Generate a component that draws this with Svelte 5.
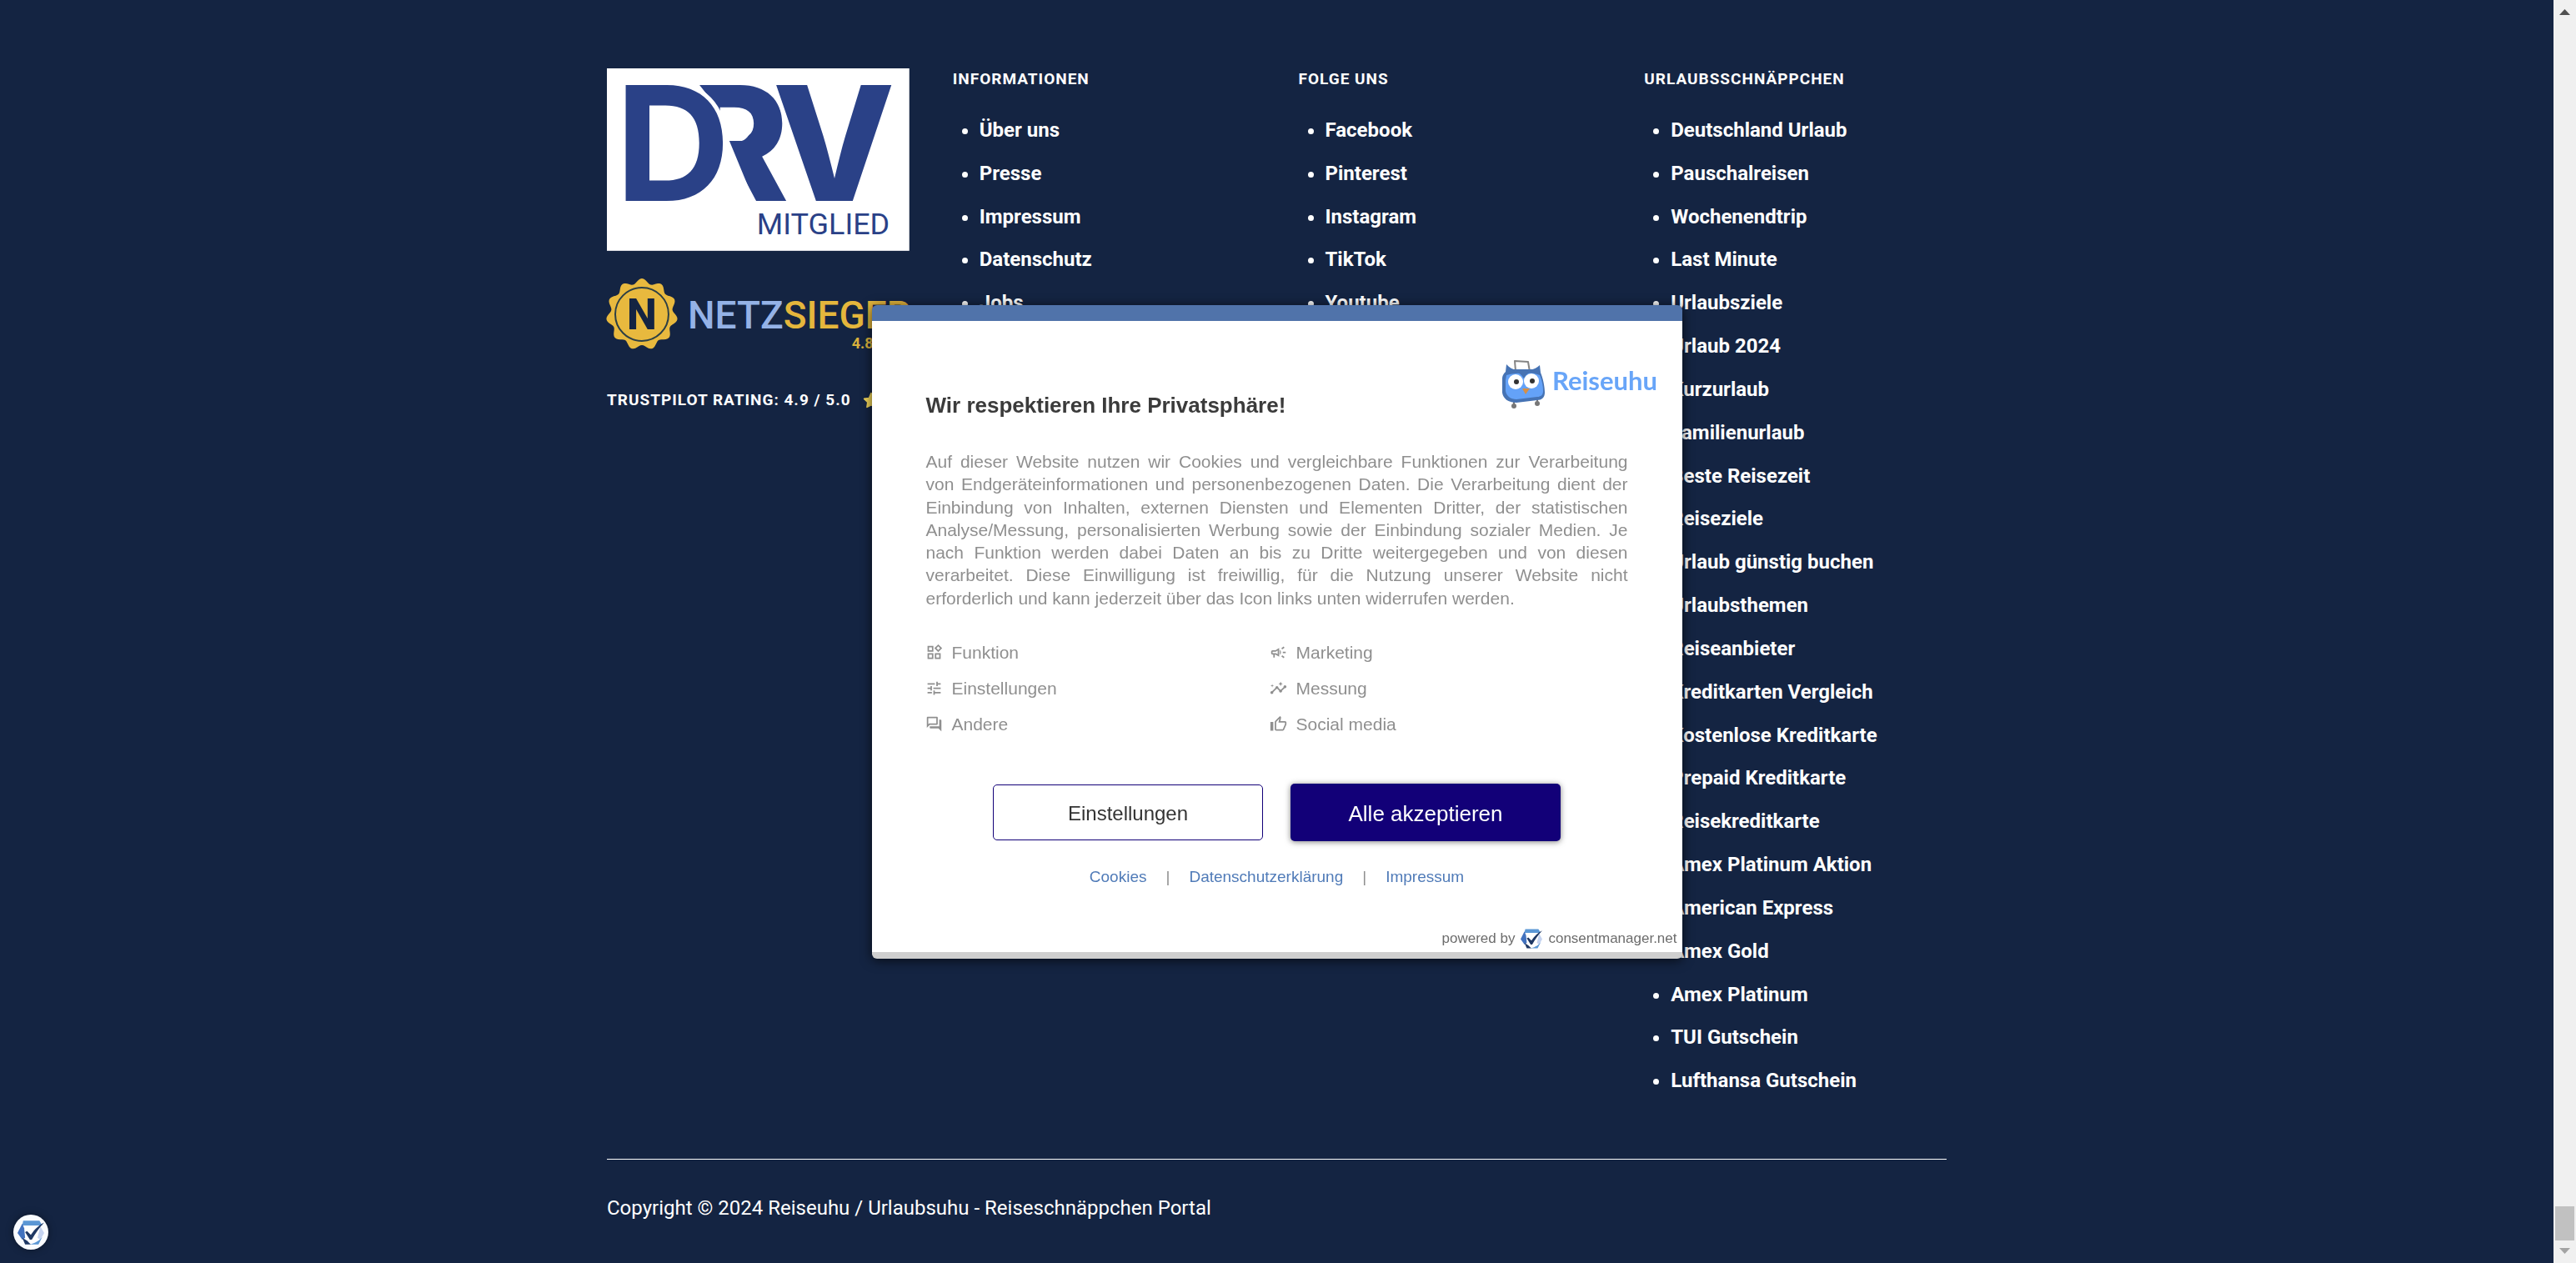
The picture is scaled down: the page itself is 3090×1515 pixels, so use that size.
<script>
  const info = ['Über uns', 'Presse', 'Impressum', 'Datenschutz', 'Jobs'];
  const social = ['Facebook', 'Pinterest', 'Instagram', 'TikTok', 'Youtube'];
  const deals = [
    'Deutschland Urlaub', 'Pauschalreisen', 'Wochenendtrip', 'Last Minute', 'Urlaubsziele',
    'Urlaub 2024', 'Kurzurlaub', 'Familienurlaub', 'Beste Reisezeit', 'Reiseziele',
    'Urlaub günstig buchen', 'Urlaubsthemen', 'Reiseanbieter', 'Kreditkarten Vergleich',
    'Kostenlose Kreditkarte', 'Prepaid Kreditkarte', 'Reisekreditkarte', 'Amex Platinum Aktion',
    'American Express', 'Amex Gold', 'Amex Platinum', 'TUI Gutschein', 'Lufthansa Gutschein'
  ];
  const columns = [
    { title: 'Informationen', items: info },
    { title: 'Folge uns', items: social },
    { title: 'Urlaubsschnäppchen', items: deals }
  ];
  const purposes = [
    { label: 'Funktion', d: 'M17.7 3.8 20.2 6.300l-2.500 2.500-2.500-2.500 2.500-2.500M9 5v4H5V5h4m10 10v4h-4v-4h4M9 15v4H5v-4h4m8.700-14L12.300 6.300l5.400 5.400 5.300-5.400L17.700 1zM11 3H3v8h8V3zm10 10h-8v8h8v-8zM11 13H3v8h8v-8z' },
    { label: 'Marketing', d: 'M18 11v2h4v-2h-4zm-2 6.600c1 .700 2.200 1.600 3.200 2.400l1.200-1.600c-1-.800-2.200-1.700-3.200-2.400l-1.200 1.600zM20.400 5.600 19.200 4c-1 .800-2.200 1.700-3.200 2.400l1.200 1.600c1-.700 2.200-1.600 3.200-2.400zM4 9c-1.100 0-2 .900-2 2v2c0 1.100.900 2 2 2h1v4h2v-4h1l5 3V6L8 9H4zm5.030 1.710L11 9.530v4.940l-1.970-1.180-.480-.290H4v-2h4.550l.480-.290zM15.500 12c0-1.330-.580-2.530-1.500-3.350v6.690c.920-.810 1.500-2.010 1.500-3.340z' },
    { label: 'Einstellungen', d: 'M3 17v2h6v-2H3zM3 5v2h10V5H3zm10 16v-2h8v-2h-8v-2h-2v6h2zM7 9v2H3v2h4v2h2V9H7zm14 4v-2H11v2h10zm-6-4h2V7h4V5h-4V3h-2v6z' },
    { label: 'Messung', d: 'M21 8c-1.450 0-2.260 1.440-1.930 2.510l-3.550 3.560c-.300-.090-.740-.090-1.040 0l-2.550-2.550C12.270 10.450 11.460 9 10 9c-1.450 0-2.270 1.440-1.930 2.520l-4.560 4.550C2.440 15.740 1 16.550 1 18c0 1.100.900 2 2 2 1.450 0 2.260-1.440 1.930-2.510l4.550-4.560c.300.090.740.090 1.040 0l2.550 2.550C12.730 16.550 13.540 18 15 18c1.450 0 2.270-1.440 1.930-2.520l3.560-3.550C21.560 12.260 23 11.450 23 10c0-1.100-.900-2-2-2zM15 9l.940-2.070L18 6l-2.060-.930L15 3l-.920 2.070L12 6l2.080.930zM3.500 11 4 9l2-.500L4 8l-.500-2L3 8l-2 .500L3 9z' },
    { label: 'Andere', d: 'M15 4v7H5.170L4 12.170V4h11m1-2H3c-.550 0-1 .450-1 1v14l4-4h10c.550 0 1-.450 1-1V3c0-.550-.450-1-1-1zm5 4h-2v9H6v2c0 .550.450 1 1 1h11l4 4V7c0-.550-.450-1-1-1z' },
    { label: 'Social media', d: 'M9 21h9c.830 0 1.540-.500 1.840-1.220l3.020-7.050c.090-.230.140-.470.140-.730v-2c0-1.100-.900-2-2-2h-6.310l.950-4.570.030-.320c0-.410-.170-.790-.440-1.060L14.170 1 7.580 7.590C7.220 7.950 7 8.450 7 9v10c0 1.100.900 2 2 2zM9 9l4.340-4.340L12 10h9v2l-3 7H9V9zM1 9h4v12H1z' }
  ];
  const legal = ['Cookies', 'Datenschutzerklärung', 'Impressum'];

  // Wavy outline of the seal: eleven lobes, the first one pointing up.
  const sealEdge = Array.from({ length: 132 }, (_, i) => {
    const a = (i / 132) * Math.PI * 2;
    const r = 40 + 3 * Math.cos(11 * a);
    return `${(42 + r * Math.sin(a)).toFixed(2)},${(43 - r * Math.cos(a)).toFixed(2)}`;
  }).join(' ');
</script>

{#snippet consentMark()}
  <path d="M6 7h17v11l-9 5-8-5z" fill="#fff" />
  <path d="M6 0h17l3 5H5z" fill="#5b97d5" />
  <path d="M5 3 0 13l5 7 3-2L7 8z" fill="#4272bf" />
  <path d="M24 6l4 7-4 7-3-2z" fill="#c5d3f0" />
  <path d="M5 18l5 3 4 4H8z" fill="#1f3864" />
  <path d="M12 25c5-1 10-3 14-8l-4 8z" fill="#5b97d5" />
  <path d="M8 12l2-1 4 4C18 9 22 5 28 2 23 7 19 13 15 20h-2z" fill="#1f3864" />
{/snippet}

<div class="window">
  <footer class="page">
    <div class="grid">
      <div class="brands">
        <svg class="drv" viewBox="0 0 363 219" role="img" aria-label="DRV Mitglied">
          <rect width="363" height="219" fill="#fff" />
          <g class="drv-big">
            <text x="92" y="159">R</text>
            <path class="cutout" d="M90 16h18l30 38h24c14 4 14 29 0 33h-15l31 75H90z" />
            <text class="drv-d" x="10" y="159">D</text>
            <text x="199" y="159">V</text>
          </g>
          <text class="drv-small" x="180" y="199">MITGLIED</text>
        </svg>
        <svg class="netzsieger" viewBox="0 0 363 86" role="img" aria-label="Netzsieger">
          <polygon points={sealEdge} fill="#e8b93e" />
          <circle cx="42" cy="43" r="32" fill="none" stroke="#2c3f45" stroke-width="2" />
          <text class="seal" x="42" y="61">N</text>
          <text class="word" x="97" y="60"><tspan class="blue">NETZ</tspan><tspan>SIEGER</tspan></text>
          <text class="score" x="294" y="84">4.88</text>
        </svg>
        <h2 class="rating">Trustpilot Rating: 4.9 / 5.0
          <svg class="star" viewBox="0 0 24 24" aria-hidden="true"><path d="M12 2l3 7 7 1-5 5 1 7-6-3-6 3 1-7-5-5 7-1z" fill="#f2d65a" stroke="#f2d65a" stroke-width="2" stroke-linejoin="round" /></svg>
        </h2>
      </div>
      {#each columns as col}
        <nav aria-label={col.title}>
          <h2>{col.title}</h2>
          <ul>
            {#each col.items as item}
              <li><a href="#top">{item}</a></li>
            {/each}
          </ul>
        </nav>
      {/each}
    </div>
    <p class="copyright">Copyright © 2024 Reiseuhu / Urlaubsuhu - Reiseschnäppchen Portal</p>
  </footer>

  <div class="scrollbar" aria-hidden="true">
    <svg viewBox="0 0 13 7"><path d="M0 7 6.500 0 13 7z" fill="#505050" /></svg>
    <div class="thumb"></div>
    <svg viewBox="0 0 13 7"><path d="M0 0h13L6.500 7z" fill="#a3a3a3" /></svg>
  </div>
</div>

<div class="overlay">
  <div class="dialog" role="dialog" aria-labelledby="consent-title">
    <div class="head">
      <h1 id="consent-title">Wir respektieren Ihre Privatsphäre!</h1>
      <svg class="logo" viewBox="0 0 186 60" role="img" aria-label="Reiseuhu">
        <path d="M14 50v6M42 47v6" stroke="#777" stroke-width="2" />
        <path d="M16 15 15 3l16 1 2 12" fill="none" stroke="#858585" stroke-width="2" stroke-linejoin="round" />
        <path d="M5 7c4 4 7 6 12 7h16c5-1 9-3 12-6l1 9c3 7 5 17 5 24 0 6-4 9-9 9l-25 3C7 53 1 48 0 41V25c0-5 2-7 4-9z" fill="#4673b4" />
        <path d="M5 20c12-3 30-4 40 0 3 7 4 13 4 19 0 5-3 7-7 7l-25 3C10 49 5 45 4 39V26z" fill="#64a2f8" />
        <path d="M8 17c6-2 13-1 18 7 4-8 11-9 18-8l-3-3H12z" fill="#4673b4" />
        <circle cx="16" cy="28" r="9" fill="#fff" />
        <circle cx="35" cy="27" r="9" fill="#fff" />
        <circle cx="17" cy="28" r="3" fill="#333" />
        <circle cx="36" cy="27" r="3" fill="#333" />
        <path d="M24 36h9l-5 7z" fill="#d68f45" />
        <circle cx="14" cy="57" r="3" fill="#777" />
        <circle cx="42" cy="54" r="3" fill="#777" />
        <text x="60" y="38">Reiseuhu</text>
      </svg>
    </div>
    <p class="body">Auf dieser Website nutzen wir Cookies und vergleichbare Funktionen zur Verarbeitung von&nbsp;Endgeräteinformationen und personenbezogenen Daten. Die Verarbeitung dient der Einbindung von Inhalten, externen Diensten und Elementen Dritter, der statistischen Analyse/Messung, personalisierten Werbung sowie der Einbindung sozialer Medien. Je nach Funktion werden dabei Daten an bis zu Dritte weitergegeben und von diesen verarbeitet. Diese Einwilligung ist freiwillig, für die Nutzung unserer Website nicht erforderlich und kann jederzeit über das Icon links unten widerrufen werden.</p>
    <ul class="purposes">
      {#each purposes as p}
        <li><svg viewBox="0 0 24 24" aria-hidden="true"><path d={p.d} fill="#8f8f8f" /></svg>{p.label}</li>
      {/each}
    </ul>
    <div class="actions">
      <button type="button" class="plain">Einstellungen</button>
      <button type="button" class="primary">Alle akzeptieren</button>
    </div>
    <div class="legal">
      {#each legal as l, i}
        {#if i > 0}<span>|</span>{/if}
        <a href="#top">{l}</a>
      {/each}
    </div>
    <div class="powered">
      <span>powered by</span>
      <svg viewBox="0 0 28 25" aria-hidden="true">{@render consentMark()}</svg>
      <a href="#top">consentmanager.net</a>
    </div>
  </div>
</div>

<button type="button" class="reopen" aria-label="Datenschutzeinstellungen">
  <svg viewBox="0 0 28 25" aria-hidden="true">{@render consentMark()}</svg>
</button>

<style>
  :global(body) { background: #142442; overflow: hidden; }
  h1, h2, p, ul { margin: 0; padding: 0; }
  a { color: inherit; text-decoration: none; }
  .window { display: flex; min-height: 100vh; }
  .page {
    flex: 1;
    padding: 82px 0 0;
    font-family: Roboto, sans-serif;
    color: #fff;
  }
  .grid, .copyright { width: 1607px; max-width: 96%; margin: 0 auto; }
  .grid { display: grid; grid-template-columns: repeat(4, 1fr); gap: 52px; }
  .brands { display: flex; flex-direction: column; }
  .drv { display: block; width: 100%; overflow: visible; }
  .drv-big {
    font: 800 191px Inter, sans-serif;
    fill: #2a4187;
    stroke: #fff;
    stroke-width: 10px;
    paint-order: stroke;
  }
  .drv-d { font-weight: 700; }
  .cutout { fill: #fff; stroke: none; }
  .drv-small { font: 400 36px Roboto, sans-serif; fill: #2a4187; }
  .netzsieger { display: block; width: 100%; margin-top: 33px; overflow: visible; }
  .seal { font: 800 51px Roboto, sans-serif; fill: #142442; text-anchor: middle; }
  .word { font: 500 46px Roboto, sans-serif; fill: #e4b63c; }
  .blue { fill: #94b2e6; }
  .score { font: 700 18px Roboto, sans-serif; fill: #d9b03c; }
  h2 {
    font-size: 19px;
    line-height: 26px;
    font-weight: 700;
    letter-spacing: 1px;
    text-transform: uppercase;
    white-space: nowrap;
  }
  .rating { margin-top: 47px; display: flex; align-items: center; gap: 14px; }
  .star { width: 20px; height: 20px; }
  nav ul { margin-top: 23px; padding-left: 32px; }
  nav li { font-size: 24px; line-height: 2.16; font-weight: 700; white-space: nowrap; }
  .copyright {
    border-top: 1px solid #fff;
    margin-top: 67px;
    padding-top: 42px;
    font-size: 24px;
    line-height: 32px;
  }
  .scrollbar {
    width: 27px;
    box-sizing: border-box;
    padding: 11px 2px;
    background: #f0f0f0;
    display: flex;
    flex-direction: column;
    align-items: center;
  }
  .scrollbar svg { width: 13px; height: 7px; }
  .thumb { width: 23px; height: 41px; background: #c1c1c1; margin: auto 0 9px; }

  .overlay {
    position: fixed;
    inset: 1px 27px 0 0;
    display: flex;
    align-items: center;
    justify-content: center;
    font-family: "Liberation Sans", Arial, sans-serif;
  }
  .dialog {
    width: 972px;
    box-sizing: border-box;
    background: #fff;
    border-top: 19px solid #5073aa;
    border-bottom: 8px solid #cfcfcf;
    border-radius: 6px;
    box-shadow: 0 2px 14px rgba(0, 0, 0, 0.7);
    padding: 45px 0 3px;
    color: #8f8f8f;
  }
  .head { display: flex; justify-content: space-between; padding: 0 30px 0 65px; }
  h1 { font-size: 26px; line-height: 32px; margin-top: 40px; color: #3b3b3b; }
  .logo { width: 186px; height: 60px; overflow: visible; }
  .logo text { font: 700 31px Lato, sans-serif; fill: #68a5f8; }
  .body { margin: 38px 65px 0; font-size: 21px; line-height: 1.3; text-align: justify; }
  .purposes {
    list-style: none;
    display: grid;
    grid-template-columns: 413px 1fr;
    margin: 30px 64px 0;
    font-size: 21px;
    line-height: 43px;
  }
  .purposes li { display: flex; align-items: center; gap: 11px; }
  .purposes svg { width: 21px; height: 21px; }
  .actions { display: flex; justify-content: center; align-items: center; gap: 33px; margin-top: 50px; }
  button { font-family: inherit; cursor: pointer; }
  .actions button { width: 324px; border-radius: 5px; padding: 3px 0 0; }
  .plain { height: 67px; border: 1px solid #120078; background: #fff; color: #333; font-size: 24px; }
  .primary { height: 69px; border: 0; background: #120078; color: #fff; font-size: 26px; box-shadow: 0 1px 7px rgba(0, 0, 0, 0.5); }
  .legal { display: flex; justify-content: center; gap: 23px; margin-top: 31px; font-size: 19px; line-height: 24px; }
  .legal a { color: #507bb8; }
  .powered {
    display: flex;
    align-items: center;
    justify-content: flex-end;
    gap: 7px;
    margin-top: 49px;
    padding-right: 6px;
    font-size: 17px;
    line-height: 26px;
    color: #6c6c6c;
  }
  .powered svg { width: 26px; height: 24px; }
  .reopen {
    position: fixed;
    left: 16px;
    bottom: 16px;
    width: 42px;
    height: 42px;
    padding: 0;
    border: 0;
    border-radius: 50%;
    background: #fafcff;
    box-shadow: 0 0 10px rgba(0, 0, 0, 0.4);
    display: flex;
    align-items: center;
    justify-content: center;
  }
  .reopen svg { width: 32px; height: 29px; }
</style>
